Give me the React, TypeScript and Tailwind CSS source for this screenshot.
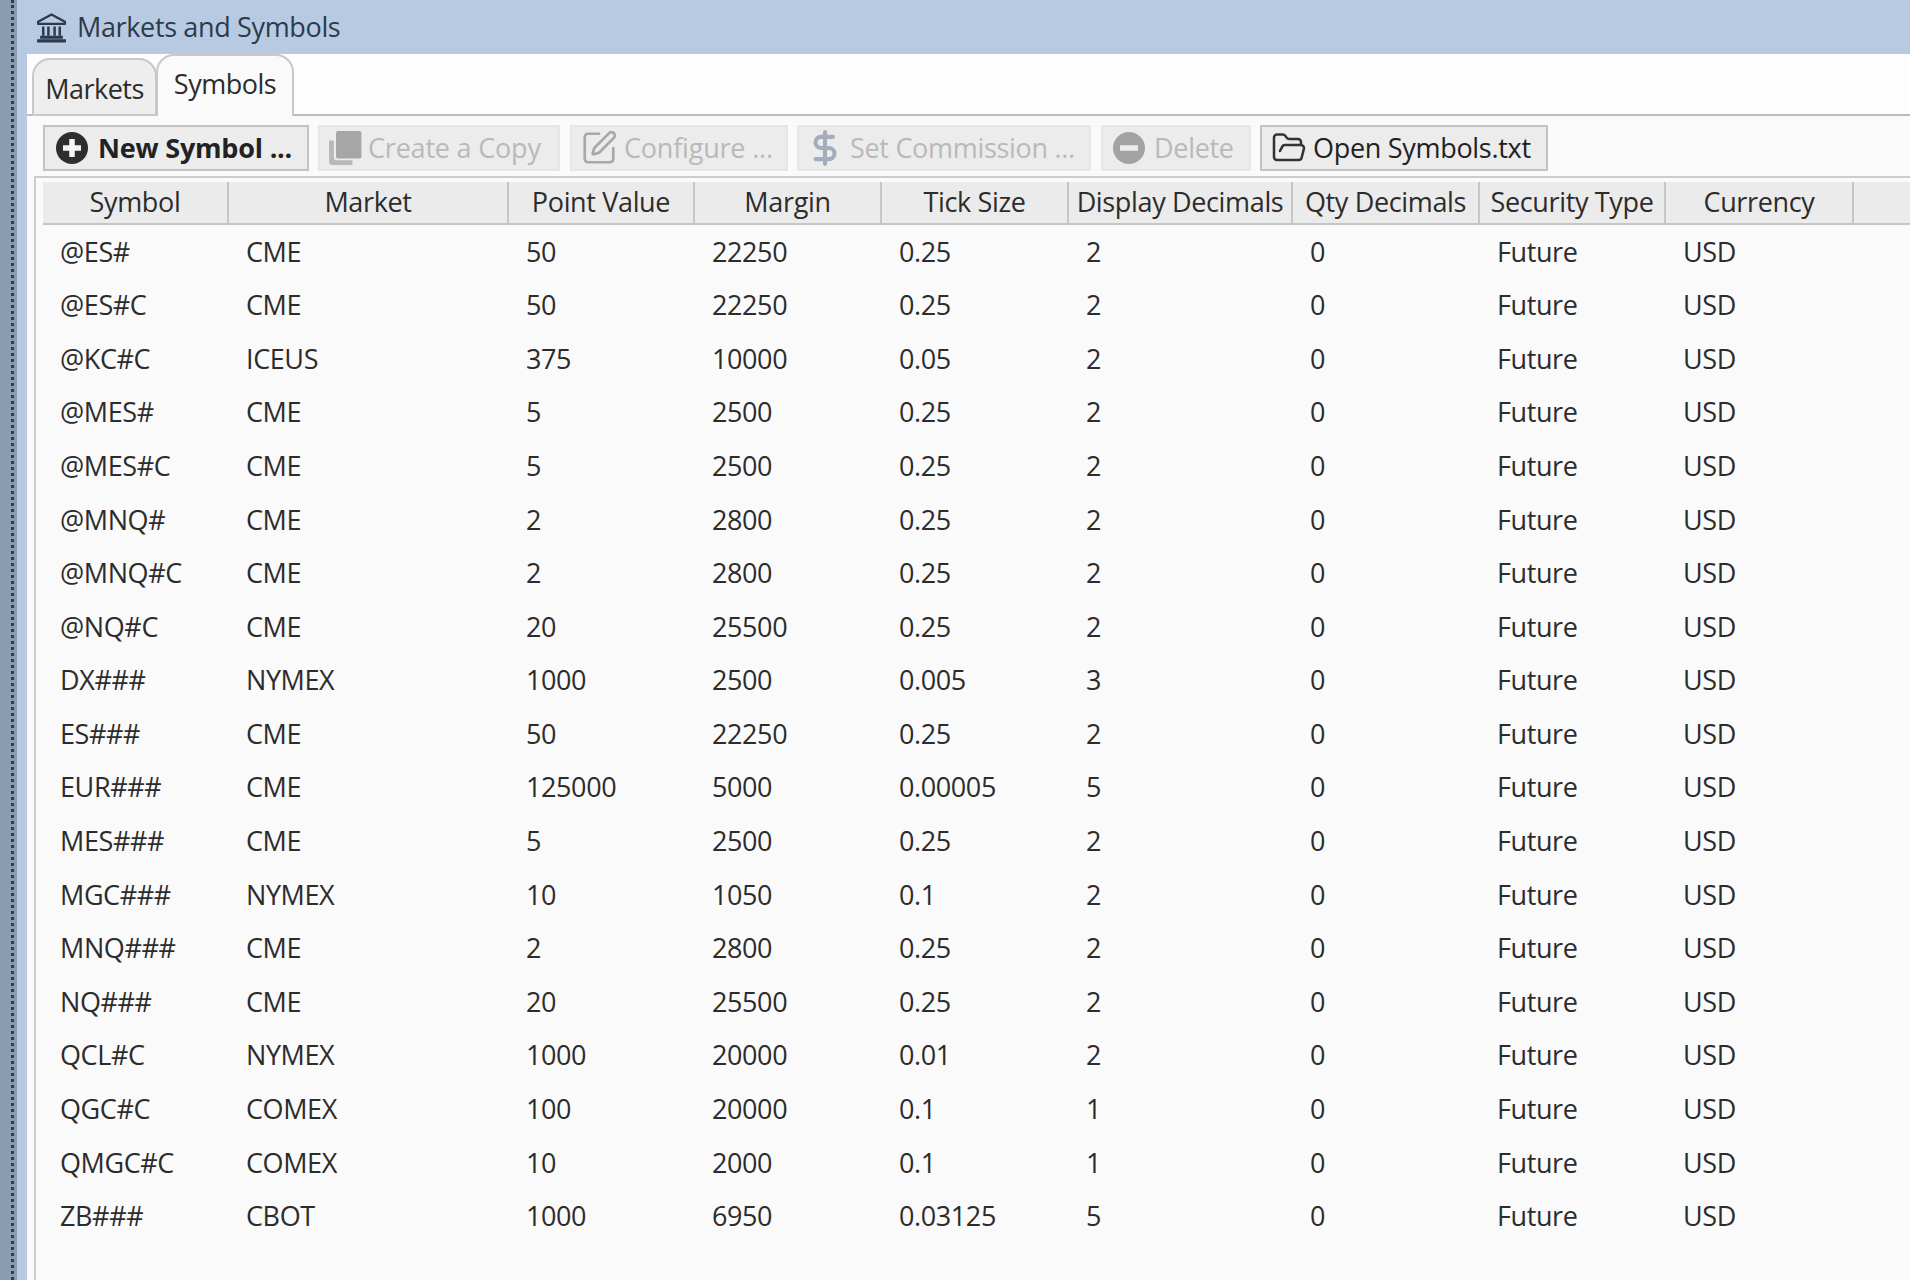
import { DollarSign, FolderOpen, SquarePen } from "lucide-react";

const widths = [186, 280, 186, 187, 187, 224, 187, 186, 188];
const template = widths.map((w) => `${w}px`).join(" ");

const headers = ["Symbol", "Market", "Point Value", "Margin", "Tick Size", "Display Decimals", "Qty Decimals", "Security Type", "Currency", ""];

const rows: string[][] = [
  ["@ES#", "CME", "50", "22250", "0.25", "2"],
  ["@ES#C", "CME", "50", "22250", "0.25", "2"],
  ["@KC#C", "ICEUS", "375", "10000", "0.05", "2"],
  ["@MES#", "CME", "5", "2500", "0.25", "2"],
  ["@MES#C", "CME", "5", "2500", "0.25", "2"],
  ["@MNQ#", "CME", "2", "2800", "0.25", "2"],
  ["@MNQ#C", "CME", "2", "2800", "0.25", "2"],
  ["@NQ#C", "CME", "20", "25500", "0.25", "2"],
  ["DX###", "NYMEX", "1000", "2500", "0.005", "3"],
  ["ES###", "CME", "50", "22250", "0.25", "2"],
  ["EUR###", "CME", "125000", "5000", "0.00005", "5"],
  ["MES###", "CME", "5", "2500", "0.25", "2"],
  ["MGC###", "NYMEX", "10", "1050", "0.1", "2"],
  ["MNQ###", "CME", "2", "2800", "0.25", "2"],
  ["NQ###", "CME", "20", "25500", "0.25", "2"],
  ["QCL#C", "NYMEX", "1000", "20000", "0.01", "2"],
  ["QGC#C", "COMEX", "100", "20000", "0.1", "1"],
  ["QMGC#C", "COMEX", "10", "2000", "0.1", "1"],
  ["ZB###", "CBOT", "1000", "6950", "0.03125", "5"],
];

function BankIcon() {
  return (
    <svg width="33" height="33" viewBox="0 0 32 32" fill="none" stroke="#2b3a4c" strokeWidth="2.2">
      <path d="M3 10.5 L16 3.5 L29 10.5 V12.5 H3 Z" strokeLinejoin="round" />
      <path d="M8 15 V24 M13 15 V24 M19 15 V24 M24 15 V24" strokeWidth="2.4" />
      <path d="M5 25.5 H27 M2 29 H30" strokeWidth="3" />
    </svg>
  );
}

function PlusCircle() {
  return (
    <svg width="34" height="34" viewBox="0 0 34 34" className="shrink-0">
      <circle cx="17" cy="17" r="16" fill="#2e2e2e" />
      <path d="M17 8 V26 M8 17 H26" stroke="#f4f4f4" strokeWidth="5.5" />
    </svg>
  );
}

function MinusCircle() {
  return (
    <svg width="34" height="34" viewBox="0 0 34 34" className="shrink-0">
      <circle cx="17" cy="17" r="16" fill="#a3a3a3" />
      <path d="M8 17 H26" stroke="#ececec" strokeWidth="5.5" />
    </svg>
  );
}

function CopyIcon() {
  return (
    <svg width="34" height="36" viewBox="0 0 32 34" className="shrink-0">
      <path d="M1 10 H5.5 V26 Q5.5 28.5 8 28.5 H23 V33 H4 Q1 33 1 30 Z" fill="#b8b8b8" />
      <rect x="7.5" y="1" width="24" height="26" rx="2" fill="#a6a6a6" />
    </svg>
  );
}

function Btn({ children, enabled, width, bold }: { children: React.ReactNode; enabled?: boolean; width: string; bold?: boolean }) {
  return (
    <div
      className={`h-[46px] flex items-center border-2 shrink-0 text-[27px] whitespace-nowrap ${width} ${
        enabled ? "bg-[#ececec] border-[#c2c2c2] text-[#222222]" : "bg-[#ececec] border-[#e6e6e6] text-[#b9b9b9]"
      } ${bold ? "font-bold text-[#151515]" : ""}`}
    >
      {children}
    </div>
  );
}

export default function App() {
  return (
    <div
      className="w-[1910px] h-[1280px] overflow-hidden flex bg-[#b7cae2] text-[#2c2c2c]"
      style={{ fontFamily: '"Open Sans", "Noto Sans", sans-serif' }}
    >
      <div className="w-[17px] h-full bg-[#8a9db0] flex justify-end pr-[3px]">
        <div className="w-0 h-full border-l-[3px] border-dotted border-[#2f3d4d]" />
      </div>
      <div className="flex-1 min-w-0 flex flex-col">
        <div className="h-[54px] flex items-center pl-[18px] gap-[9px] bg-[#b7cae2] text-[#2b3a4c] text-[27px] tracking-[-0.35px]">
          <BankIcon />
          <span>Markets and Symbols</span>
        </div>
        <div className="flex-1 min-h-0 bg-[#fafafa] ml-[10px]">
          <div className="h-[62px] flex items-end pl-[5px] border-b-2 border-[#bcbcbc] bg-[#fdfdfd]">
            <div className="w-[125px] h-[58px] -mb-[2px] bg-[#eeeeee] border-2 border-[#c8c8c8] rounded-t-[18px] flex items-center justify-center text-[27px] tracking-[-0.5px] pt-[4px]">
              Markets
            </div>
            <div className="w-[138px] h-[62px] -mb-[2px] -ml-[1px] bg-[#fafafa] border-2 border-b-0 border-[#c8c8c8] rounded-t-[18px] flex items-center justify-center text-[27px] tracking-[-0.5px] pb-[4px]">
              Symbols
            </div>
          </div>
          <div className="flex items-start pl-[16px] pt-[9px] h-[60px]">
            <Btn enabled bold width="w-[266px] pl-[10px] gap-[9px] mr-[9px]">
              <PlusCircle />
              <span className="tracking-[-0.2px]">New Symbol ...</span>
            </Btn>
            <Btn width="w-[242px] pl-[8px] gap-[6px] mr-[10px]">
              <CopyIcon />
              <span className="tracking-[-0.2px]">Create a Copy</span>
            </Btn>
            <Btn width="w-[218px] pl-[8px] gap-[6px] mr-[9px]">
              <SquarePen size={38} strokeWidth={1.7} className="text-[#a8a8a8] shrink-0" />
              <span className="tracking-[-0.2px]">Configure ...</span>
            </Btn>
            <Btn width="w-[294px] pl-[7px] gap-[6px] mr-[10px]">
              <DollarSign size={38} strokeWidth={2.6} className="text-[#a3adbd] shrink-0" />
              <span className="tracking-[-0.3px]">Set Commission ...</span>
            </Btn>
            <Btn width="w-[150px] pl-[9px] gap-[8px] mr-[9px]">
              <MinusCircle />
              <span className="tracking-[-0.3px]">Delete</span>
            </Btn>
            <Btn enabled width="w-[288px] pl-[9px] gap-[6px]">
              <FolderOpen size={36} strokeWidth={1.7} className="text-[#333333] shrink-0" />
              <span className="tracking-[-0.3px]">Open Symbols.txt</span>
            </Btn>
          </div>
          <div className="ml-[7px] border-t-2 border-l-2 border-[#cccccc] pl-[7px] pt-[4px] h-full bg-[#fafafa]">
            <div
              className="grid h-[43px] bg-[#ebebeb] border-b-2 border-[#c6c6c6] text-[27px] tracking-[-0.35px] w-full"
              style={{ gridTemplateColumns: `${template} 1fr` }}
            >
              {headers.map((h, i) => (
                <div
                  key={i}
                  className={`flex items-center justify-center whitespace-nowrap overflow-hidden ${
                    i < headers.length - 1 ? "border-r-2 border-[#c6c6c6]" : ""
                  }`}
                >
                  {h}
                </div>
              ))}
            </div>
            <div>
              {rows.map((r) => (
                <div
                  key={r[0]}
                  className="grid h-[53.6px] items-center text-[27px] tracking-[-0.4px]"
                  style={{ gridTemplateColumns: template }}
                >
                  {[...r, "0", "Future", "USD"].map((c, i) => (
                    <div key={i} className="pl-[17px] whitespace-nowrap">
                      {c}
                    </div>
                  ))}
                </div>
              ))}
            </div>
          </div>
        </div>
      </div>
    </div>
  );
}
